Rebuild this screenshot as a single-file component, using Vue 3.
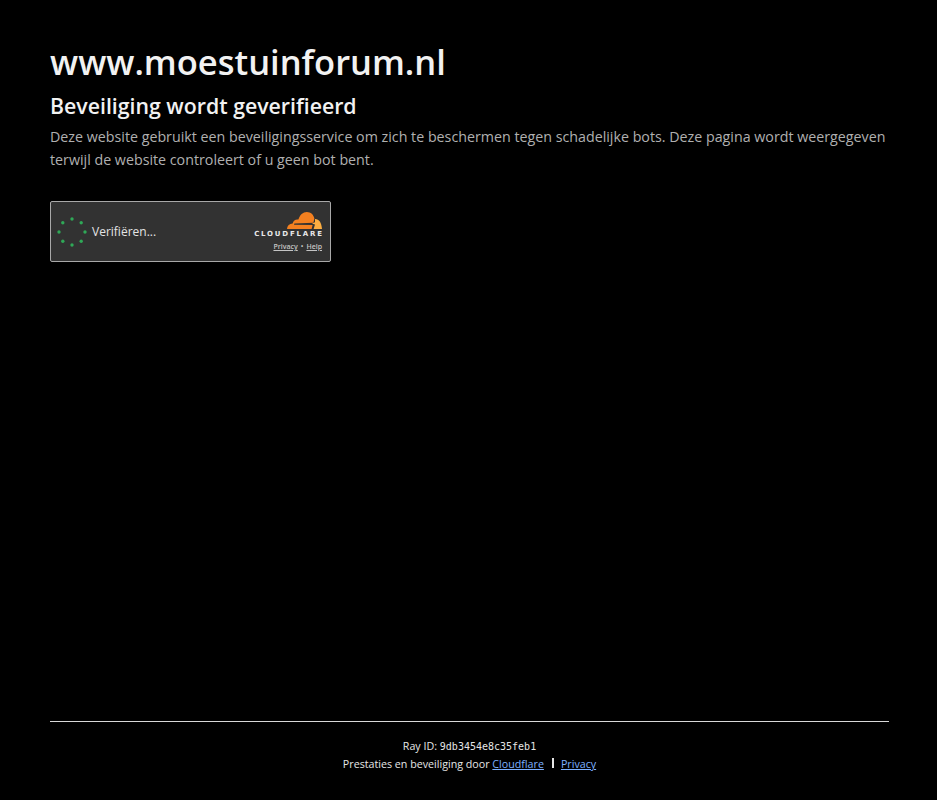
<template>
  <div class="page">
    <main class="main">
      <h1 class="site">www.moestuinforum.nl</h1>
      <h2 class="title">Beveiliging wordt geverifieerd</h2>
      <p class="msg">
        Deze website gebruikt een beveiligingsservice om zich te beschermen tegen schadelijke bots.
        Deze pagina wordt weergegeven terwijl de website controleert of u geen bot bent.
      </p>

      <div class="widget">
        <div class="status">
          <svg class="spinner" width="30" height="30" viewBox="0 0 30 30">
            <circle v-for="dot in dots" :key="dot.x" :cx="dot.x" :cy="dot.y" r="1.7" fill="#2fa857" />
          </svg>
          <span class="verify">Verifiëren...</span>
        </div>
        <div class="brand">
          <svg class="cloud" width="35" height="17" viewBox="0 0 35 17">
            <path
              d="M0 17 C0.2 13.6 2.4 11.6 5.6 11.4 C6.4 8.4 8.8 7 11.4 7.6 C12.8 2.8 16 0 19.8 0 C23.8 0 26.6 2.8 27.4 6.6 L26.4 10.8 L7.4 11.4 L7 12.8 L25.6 13 L24.6 17 Z"
              fill="#f38020"
            />
            <path
              d="M28 7 C31.8 6.8 34.6 10.4 35 17 L26.6 17 L28 12.4 L25 11.6 L28 10.2 Z"
              fill="#fbad41"
            />
          </svg>
          <div class="wordmark">CLOUDFLARE</div>
          <div class="legal">
            <a href="#">Privacy</a>
            <span class="sep">•</span>
            <a href="#">Help</a>
          </div>
        </div>
      </div>
    </main>

    <footer class="footer">
      <div class="ray">Ray ID: <code>9db3454e8c35feb1</code></div>
      <div class="perf">
        Prestaties en beveiliging door <a href="#">Cloudflare</a>
        <span class="bar"></span>
        <a href="#">Privacy</a>
      </div>
    </footer>
  </div>
</template>

<script setup>
// eight dots around the ring
const dots = Array.from({ length: 8 }, (_, i) => {
  const a = (i * Math.PI) / 4
  return { x: 15 + 13 * Math.cos(a), y: 15 + 13 * Math.sin(a) }
})
</script>

<style>
html,
body {
  margin: 0;
  background: #000;
}
</style>

<style scoped>
.page {
  height: 800px;
  box-sizing: border-box;
  padding: 0 48px;
  display: flex;
  flex-direction: column;
  background: #000;
  color: #d9d9d9;
  font-family: 'Open Sans', 'Noto Sans', sans-serif;
}

.main {
  flex: 1;
  padding-left: 2px;
}

.site {
  margin: 39px 0 0;
  font-size: 34.5px;
  line-height: 46px;
  font-weight: 600;
  color: #f2f2f2;
}

.title {
  margin: 6px 0 0;
  font-size: 21.3px;
  line-height: 30px;
  font-weight: 600;
  color: #f2f2f2;
}

.msg {
  margin: 5px 0 0;
  font-size: 14.25px;
  line-height: 22.5px;
  color: #b0b0b0;
}

.widget {
  margin-top: 30px;
  width: 281px;
  height: 61px;
  box-sizing: border-box;
  border: 1px solid #a8a8a8;
  border-radius: 2px;
  background: #323232;
  display: flex;
  justify-content: space-between;
  align-items: center;
  padding: 0 8px 0 6px;
}

.status {
  display: flex;
  align-items: center;
  gap: 5px;
}

.verify {
  font-size: 12px;
  color: #e4e4e4;
}

.brand {
  display: flex;
  flex-direction: column;
  align-items: flex-end;
}

.cloud {
  display: block;
}

.wordmark {
  margin-top: 1px;
  font-family: 'DejaVu Sans', sans-serif;
  font-size: 7px;
  line-height: 9px;
  font-weight: 700;
  letter-spacing: 1.8px;
  margin-right: -1.8px;
  color: #e8e8e8;
}

.legal {
  margin-top: 3px;
  display: flex;
  align-items: center;
  gap: 3px;
  font-size: 7px;
  line-height: 9px;
  font-weight: 600;
  color: #c4c4c4;
}

.legal a {
  color: #c4c4c4;
}

.footer {
  border-top: 1px solid #d8d8d8;
  margin-left: 2px;
  padding: 15px 0 26px;
  height: 79px;
  box-sizing: border-box;
  text-align: center;
  font-size: 10.7px;
  line-height: 18px;
  color: #e6e6e6;
}

.ray {
  height: 18px;
}

.ray code {
  font-family: 'DejaVu Sans Mono', monospace;
  font-size: 10px;
}

.perf a {
  color: #7db0ff;
}

.bar {
  display: inline-block;
  width: 2px;
  height: 10px;
  background: #e6e6e6;
  margin: 0 7px 0 8px;
}
</style>
